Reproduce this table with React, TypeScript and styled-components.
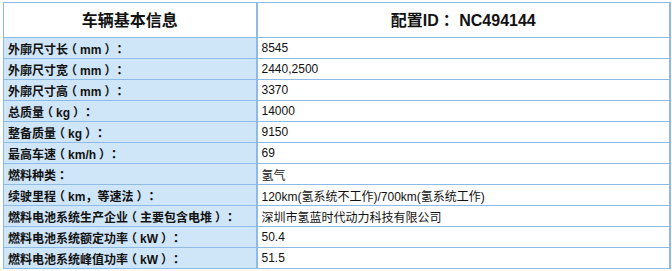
import { createGlobalStyle } from 'styled-components';
import styled from 'styled-components';

type Row = {
  label: string,
  value: string,
};

const rows: Row[] = [
  { label: '外廓尺寸长（mm）：', value: '8545' },
  { label: '外廓尺寸宽（mm）：', value: '2440,2500' },
  { label: '外廓尺寸高（mm）：', value: '3370' },
  { label: '总质量（kg）：', value: '14000' },
  { label: '整备质量（kg）：', value: '9150' },
  { label: '最高车速（km/h）：', value: '69' },
  { label: '燃料种类：', value: '氢气' },
  { label: '续驶里程（km，等速法）：', value: '120km(氢系统不工作)/700km(氢系统工作)' },
  { label: '燃料电池系统生产企业（主要包含电堆）：', value: '深圳市氢蓝时代动力科技有限公司' },
  { label: '燃料电池系统额定功率（kW）：', value: '50.4' },
  { label: '燃料电池系统峰值功率（kW）：', value: '51.5' },
];

// full-width punctuation is centred in its em box in the reference
const withPunct = (text: string) =>
  text.split(/([（）：，])/).map((part, idx) => {
    if (!/^[（）：，]$/.test(part)) return part;
    return <Punct key={idx} $bracket={part === '（' || part === '）'}>{part}</Punct>;
  });

const GlobalStyle = createGlobalStyle`
  body {
    margin: 0;
    background: #ffffff;
    font-family: "Liberation Sans", Arial, "Noto Sans CJK SC", sans-serif;
    text-spacing-trim: space-all;
  }
`;

export default function App() {
  return <Page>
    <GlobalStyle />
    <Table>
      <colgroup>
        <col style={{ width: 253 }} />
        <col />
      </colgroup>
      <thead>
        <tr>
          <HeadCell>车辆基本信息</HeadCell>
          <HeadCell>{withPunct('配置ID：')} NC494144</HeadCell>
        </tr>
      </thead>
      <tbody>
        {rows.map((row, idx) => (
          <tr key={idx}>
            <LabelCell>{withPunct(row.label)}</LabelCell>
            <ValueCell>{row.value}</ValueCell>
          </tr>
        ))}
      </tbody>
    </Table>
  </Page>;
}

const Page = styled.div`
  padding: 2px 0px 0px 3px;
`;

const Table = styled.table`
  width: 668px;
  border-collapse: collapse;
  table-layout: fixed;
  border-right: 2px solid #8dbbe6;

  td, th {
    border: 1px solid #8dbbe6;
  }
`;

const Punct = styled.span<{ $bracket: boolean }>`
  font-family: "Noto Sans CJK KR", "Noto Sans CJK TC", sans-serif;
  font-feature-settings: ${p => p.$bracket ? '"halt"' : 'normal'};
  padding: 0px ${p => p.$bracket ? '0.25em' : '0px'};
`;

const HeadCell = styled.th`
  height: 32px;
  padding: 0px 0px 2px 0px;

  font-size: 16px;
  font-weight: bold;
  color: #111111;
  text-align: center;
  background: #ffffff;

  &:first-child {
    border-right-width: 2px;
  }
`;

const LabelCell = styled.td`
  height: 20px;
  padding: 0px 0px 0px 4px;

  font-size: 12px;
  font-weight: bold;
  color: #111111;
  background: #cfe5f8;
  white-space: nowrap;
  border-right-width: 2px !important;
`;

const ValueCell = styled.td`
  height: 20px;
  padding: 0px 0px 0px 4px;

  font-size: 12px;
  color: #111111;
  background: #ffffff;
  white-space: nowrap;
`;
